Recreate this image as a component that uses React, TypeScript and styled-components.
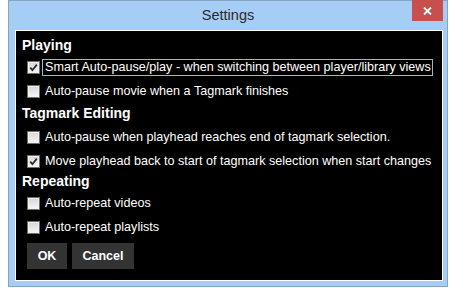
import React from 'react';
import styled, { createGlobalStyle } from 'styled-components';

const GlobalStyle = createGlobalStyle`
  html, body {
    margin: 0;
    padding: 0;
    background: #ffffff;
  }
  body {
    font-family: "Liberation Sans", Arial, sans-serif;
  }
`;

const Window = styled.div`
  box-sizing: border-box;
  margin-left: 8px;
  width: 440px;
  height: 287px;
  border: 1px solid #86a4c2;
  background: #a6cdf5;
  display: flex;
  flex-direction: column;
`;

const TitleBar = styled.div`
  height: 29px;
  display: grid;
  grid-template-columns: 1fr auto 1fr;
  align-items: start;
`;

const Title = styled.div`
  grid-column: 2;
  font-size: 14.5px;
  line-height: 29px;
  color: #2a2a2a;
`;

const CloseButton = styled.button`
  grid-column: 3;
  justify-self: end;
  margin: -1px 4px 0 0;
  width: 31px;
  height: 21px;
  border: none;
  padding: 0;
  background: #c7504f;
  display: flex;
  align-items: center;
  justify-content: center;
`;

const Panel = styled.div`
  box-sizing: border-box;
  margin: 0 4px 0 6px;
  height: 251px;
  border: 1px solid #ffffff;
  background: #000000;
  padding: 4px 6px;
  display: flex;
  flex-direction: column;
`;

const Heading = styled.div<{ $top?: number; $bottom?: number }>`
  margin-top: ${(p) => p.$top ?? 0}px;
  margin-bottom: ${(p) => p.$bottom ?? 0}px;
  font-weight: bold;
  font-size: 14px;
  line-height: 20px;
  color: #ffffff;
`;

const Row = styled.div`
  height: 24px;
  padding-left: 5px;
  display: flex;
  align-items: center;
`;

const Box = styled.span`
  box-sizing: border-box;
  width: 13px;
  height: 13px;
  border: 1px solid #6f6f6f;
  background: linear-gradient(#d6d6d6, #f6f6f6);
  box-shadow: inset 0 0 0 1px #f2f2f2;
  display: flex;
  align-items: center;
  justify-content: center;
  flex: none;
`;

const Label = styled.span<{ $focused?: boolean }>`
  margin-left: 2px;
  height: 17px;
  box-sizing: border-box;
  padding: 0 1px 0 2px;
  border: 1px solid ${(p) => (p.$focused ? '#a3b4c6' : 'transparent')};
  font-size: 12.6px;
  line-height: 15px;
  color: #ffffff;
  white-space: nowrap;
`;

const Buttons = styled.div`
  margin-top: 4px;
  padding-left: 5px;
  display: flex;
  gap: 5px;
`;

const Button = styled.button<{ $width: number }>`
  width: ${(p) => p.$width}px;
  height: 26px;
  border: none;
  padding: 0;
  background: #333333;
  color: #ffffff;
  font-family: "Liberation Sans", Arial, sans-serif;
  font-weight: bold;
  font-size: 12.5px;
`;

function CheckBox({ checked }: { checked?: boolean }) {
  return (
    <Box>
      {checked && (
        <svg width="9" height="9" viewBox="0 0 9 9">
          <path d="M1.2 4.6 L3.4 7.2 L7.8 1.6" fill="none" stroke="#2b2b2b" strokeWidth="1.8" />
        </svg>
      )}
    </Box>
  );
}

function Option({ text, checked, focused }: { text: string; checked?: boolean; focused?: boolean }) {
  return (
    <Row>
      <CheckBox checked={checked} />
      <Label $focused={focused}>{text}</Label>
    </Row>
  );
}

export default function App() {
  return (
    <>
      <GlobalStyle />
      <Window>
        <TitleBar>
          <Title>Settings</Title>
          <CloseButton aria-label="Close">
            <svg width="9" height="8" viewBox="0 0 9 8">
              <path d="M1 0.5 L8 7.5 M8 0.5 L1 7.5" stroke="#ffffff" strokeWidth="1.8" />
            </svg>
          </CloseButton>
        </TitleBar>
        <Panel>
          <Heading>Playing</Heading>
          <Option checked focused text="Smart Auto-pause/play - when switching between player/library views" />
          <Option text="Auto-pause movie when a Tagmark finishes" />
          <Heading $bottom={2}>Tagmark Editing</Heading>
          <Option text="Auto-pause when playhead reaches end of tagmark selection." />
          <Option checked text="Move playhead back to start of tagmark selection when start changes" />
          <Heading $top={-2}>Repeating</Heading>
          <Option text="Auto-repeat videos" />
          <Option text="Auto-repeat playlists" />
          <Buttons>
            <Button $width={40}>OK</Button>
            <Button $width={62}>Cancel</Button>
          </Buttons>
        </Panel>
      </Window>
    </>
  );
}
